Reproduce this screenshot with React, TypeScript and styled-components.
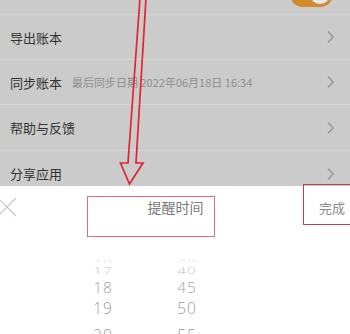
import React from "react";
import styled, { createGlobalStyle } from "styled-components";

const Global = createGlobalStyle`
  html, body { margin: 0; padding: 0; background: #cbcbcb; }
  * { box-sizing: border-box; }
`;

const Screen = styled.div`
  position: relative;
  width: 350px;
  height: 334px;
  overflow: hidden;
  display: flex;
  flex-direction: column;
  background: #cbcbcb;
  font-family: "Noto Sans CJK SC", "Noto Sans", sans-serif;
`;

const List = styled.div`
  flex: none;
  display: flex;
  flex-direction: column;
  height: 186px;
  overflow: hidden;
`;

const Row = styled.div<{ $h?: number }>`
  height: ${(p) => p.$h ?? 45}px;
  flex: none;
  display: flex;
  align-items: center;
  padding: 0 15px 0 10px;
  border-bottom: 1px solid #d7d7d7;
`;

const TopRow = styled(Row)`
  align-items: flex-end;
  justify-content: flex-end;
  padding-right: 17px;
`;

const Label = styled.span`
  font-size: 13px;
  color: #333;
  white-space: nowrap;
`;

const Sub = styled.span`
  margin-left: 10px;
  font-size: 11px;
  color: #8e8e8e;
  white-space: nowrap;
`;

const Spacer = styled.div`
  flex: 1;
`;

const Toggle = styled.div`
  width: 43px;
  height: 26px;
  margin-bottom: 7px;
  border-radius: 13px;
  background: #d38a2c;
  display: flex;
  align-items: center;
  justify-content: flex-end;
  padding-right: 2px;
`;

const Knob = styled.div`
  width: 22px;
  height: 22px;
  border-radius: 50%;
  background: #e6e6ec;
  border: 1px solid #c98a3a;
`;

const Sheet = styled.div`
  flex: 1;
  min-height: 0;
  overflow: hidden;
  background: #ffffff;
  display: flex;
  flex-direction: column;
`;

const Header = styled.div`
  flex: none;
  height: 42px;
  display: grid;
  grid-template-columns: 1fr auto 1fr;
  align-items: center;
`;

const Close = styled.div`
  margin-left: -3px;
  display: flex;
  align-items: center;
`;

const Title = styled.div`
  font-size: 14px;
  color: #7a7a7a;
  padding-left: 1px;
`;

const Done = styled.div`
  justify-self: end;
  padding-right: 5px;
  font-size: 13px;
  color: #8a8a8a;
`;

const Picker = styled.div`
  flex: none;
  display: flex;
  padding: 31px 0 0 61px;
`;

const Column = styled.div`
  width: 84px;
  display: flex;
  flex-direction: column;
`;

const Item = styled.div<{ $h: number; $scale: number; $color: string }>`
  flex: none;
  height: ${(p) => p.$h}px;
  display: flex;
  align-items: center;
  justify-content: center;
  font-family: "Open Sans", "Liberation Sans", sans-serif;
  font-weight: 300;
  font-size: 15.5px;
  letter-spacing: 1px;
  color: ${(p) => p.$color};
  overflow: visible;
  span {
    display: inline-block;
    line-height: 1;
    transform: scaleY(${(p) => p.$scale});
  }
`;

const Mark = styled.div<{ $x: number; $y: number; $w: number; $h: number; $c: string }>`
  position: absolute;
  left: ${(p) => p.$x}px;
  top: ${(p) => p.$y}px;
  width: ${(p) => p.$w}px;
  height: ${(p) => p.$h}px;
  border: 1.5px solid ${(p) => p.$c};
  pointer-events: none;
`;

const ArrowLayer = styled.svg`
  position: absolute;
  left: 0;
  top: 0;
  pointer-events: none;
`;

const Chevron = () => (
  <svg width="9" height="14" viewBox="0 0 9 14">
    <path d="M2 1.5 L7 7 L2 12.5" fill="none" stroke="#9a9a9a" strokeWidth="1.6" />
  </svg>
);

const wheel = [
  { h: 6, s: 0.3, c: "#e4e4e4" },
  { h: 12, s: 0.55, c: "#c4c4c4" },
  { h: 21, s: 0.95, c: "#a2a2a2" },
  { h: 22, s: 1, c: "#9a9a9a" },
  { h: 31, s: 1, c: "#959595" },
];

const hours = ["16", "17", "18", "19", "20"];
const mins = ["35", "40", "45", "50", "55"];

export default function App() {
  return (
    <>
      <Global />
      <Screen>
        <List>
          <TopRow $h={15}>
            <Toggle>
              <Knob />
            </Toggle>
          </TopRow>
          <Row>
            <Label>导出账本</Label>
            <Spacer />
            <Chevron />
          </Row>
          <Row>
            <Label>同步账本</Label>
            <Sub>最后同步日期 2022年06月18日 16:34</Sub>
            <Spacer />
            <Chevron />
          </Row>
          <Row $h={46}>
            <Label>帮助与反馈</Label>
            <Spacer />
            <Chevron />
          </Row>
          <Row $h={46}>
            <Label>分享应用</Label>
            <Spacer />
            <Chevron />
          </Row>
        </List>
        <Sheet>
          <Header>
            <Close>
              <svg width="20" height="20" viewBox="0 0 20 20">
                <path d="M1 1 L19 19 M19 1 L1 19" stroke="#c4c4c4" strokeWidth="1.1" fill="none" />
              </svg>
            </Close>
            <Title>提醒时间</Title>
            <Done>完成</Done>
          </Header>
          <Picker>
            <Column>
              {hours.map((t, i) => (
                <Item key={t} $h={wheel[i].h} $scale={wheel[i].s} $color={wheel[i].c}>
                  <span>{t}</span>
                </Item>
              ))}
            </Column>
            <Column>
              {mins.map((t, i) => (
                <Item key={t} $h={wheel[i].h} $scale={wheel[i].s} $color={wheel[i].c}>
                  <span>{t}</span>
                </Item>
              ))}
            </Column>
          </Picker>
        </Sheet>
        <Mark $x={87} $y={196} $w={128} $h={41} $c="#df6f78" />
        <Mark $x={303} $y={184} $w={60} $h={41} $c="#b8404c" />
        <ArrowLayer width="350" height="334" viewBox="0 0 350 334">
          <polygon
            points="140,-2 146,-2 136,163 143,163 129.5,184 120.5,163 128,163"
            fill="none"
            stroke="#e0252f"
            strokeWidth="1.7"
            strokeLinejoin="miter"
          />
        </ArrowLayer>
      </Screen>
    </>
  );
}
